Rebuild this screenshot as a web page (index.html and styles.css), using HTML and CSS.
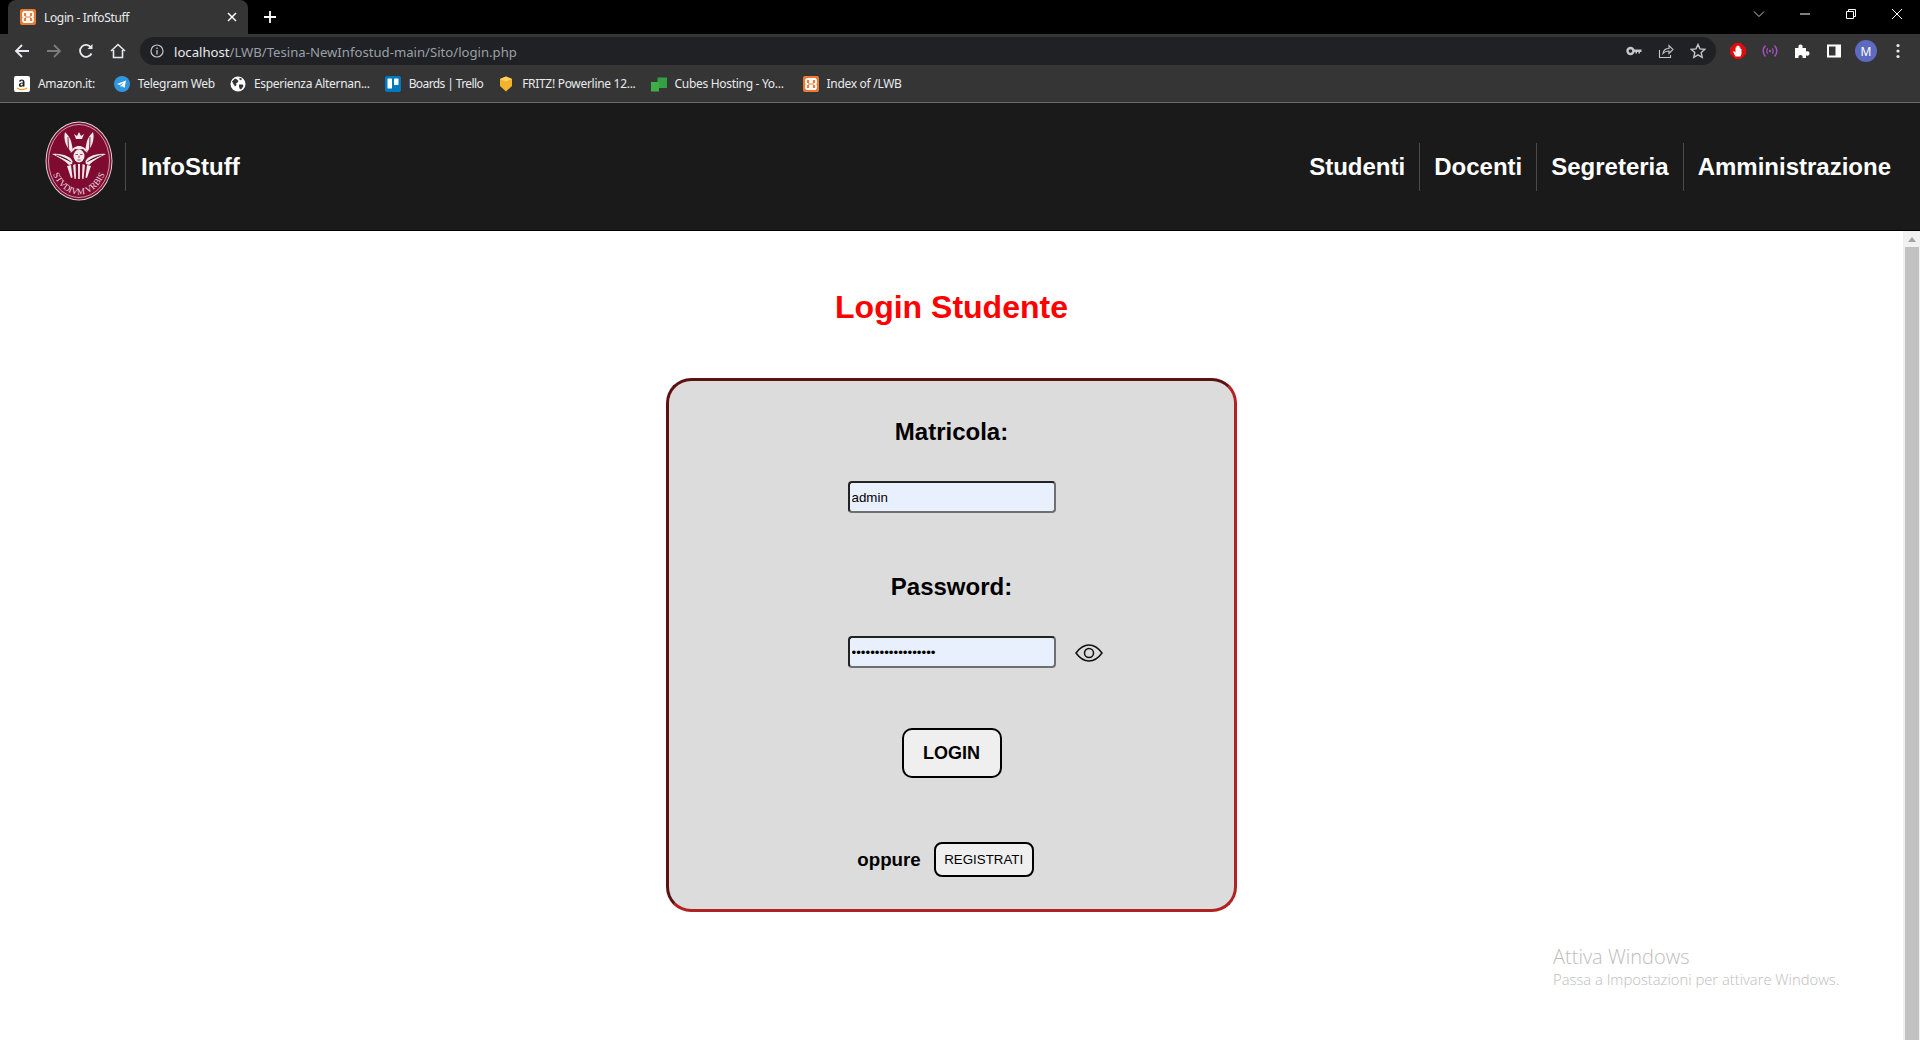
FILE: index.html
```html
<!DOCTYPE html>
<html lang="it">
<head>
    <meta charset="UTF-8" />
    <title>Login - InfoStuff</title>
    <link rel="stylesheet" href="styles.css">
</head>
<body>
    <div class="tabstrip">
        <div class="tab">
            <svg class="favicon" viewBox="0 0 16 16"><rect width="16" height="16" rx="2" fill="#ea7a34"/><path d="M4 3h3v3.500h2V3h3l1 1v3l-1.500 1L13 9v3l-1 1H9V9.500H7V13H4l-1-1V9l1.500-1L3 7V4z" fill="none" stroke="#fff" stroke-width="1.800"/></svg>
            <span class="tab-title">Login - InfoStuff</span>
            <svg class="tab-close" viewBox="0 0 10 10"><path d="M1 1l8 8M9 1l-8 8" stroke="#fff" stroke-width="1.500"/></svg>
        </div>
        <svg class="new-tab" viewBox="0 0 12 12"><path d="M6 0v12M0 6h12" stroke="#fff" stroke-width="1.800"/></svg>
        <div class="window-controls">
            <svg viewBox="0 0 12 12"><path d="M1 3.500l5 5 5-5" fill="none" stroke="#c8c8c8"/></svg>
            <svg viewBox="0 0 12 12"><path d="M1 6h10" stroke="#fff"/></svg>
            <svg viewBox="0 0 12 12"><path d="M1.500 3.500h7v7h-7zM3.500 3.500v-2h7v7h-2" fill="none" stroke="#fff"/></svg>
            <svg viewBox="0 0 12 12"><path d="M1 1l10 10M11 1L1 11" stroke="#fff"/></svg>
        </div>
    </div>

    <div class="toolbar">
        <div class="nav-buttons">
            <svg viewBox="0 0 16 16"><path d="M15 8H2M8 2L2 8l6 6" fill="none" stroke="#e8eaed" stroke-width="1.800"/></svg>
            <svg viewBox="0 0 16 16"><path d="M1 8h13M8 2l6 6-6 6" fill="none" stroke="#7c7c7c" stroke-width="1.800"/></svg>
            <svg viewBox="0 0 16 16"><path d="M13.500 10.500A6 6 0 1 1 13 4.500" fill="none" stroke="#e8eaed" stroke-width="1.800"/><path d="M14.500 1v5h-5z" fill="#e8eaed"/></svg>
            <svg viewBox="0 0 16 16"><path d="M1 8l7-6.500L15 8M3.500 7v7.500h9V7" fill="none" stroke="#e8eaed" stroke-width="1.600"/></svg>
        </div>
        <div class="addressbar">
            <svg class="info-icon" viewBox="0 0 14 14"><circle cx="7" cy="7" r="6" fill="none" stroke="#c4c7ca" stroke-width="1.200"/><path d="M7 6v4.500M7 3.500v1.500" stroke="#c4c7ca" stroke-width="1.300"/></svg>
            <span class="url"><span class="url-host">localhost</span>/LWB/Tesina-NewInfostud-main/Sito/login.php</span>
            <div class="address-actions">
                <svg viewBox="0 0 16 16"><circle cx="4.500" cy="8" r="3" fill="none" stroke="#c4c7ca" stroke-width="2.400"/><path d="M7 6.500h8.500v2.500h-1.500v1.500h-1.500V9H11v1.500H9.500V9H7z" fill="#c4c7ca"/></svg>
                <svg viewBox="0 0 16 16"><path d="M1.500 7v7.500h11V12M5 10.500C5.500 7 8 5.500 11 5.500V2.500l4 4-4 4V8C8.500 8 6.500 8.700 5 10.500z" fill="none" stroke="#c4c7ca" stroke-width="1.100"/></svg>
                <svg viewBox="0 0 16 16"><path d="M8 1.500l2 4.400 4.700.5-3.500 3.200 1 4.700L8 11.900l-4.200 2.400 1-4.700L1.300 6.400 6 5.900z" fill="none" stroke="#c4c7ca" stroke-width="1.400"/></svg>
            </div>
        </div>
        <div class="extensions">
            <svg viewBox="0 0 16 16"><path d="M5 0h6l5 5v6l-5 5H5l-5-5V5z" fill="#e00b0b"/><path d="M5.500 13.500L3 8.800l1-.8 1.500 1.500V4.500h1V3h1v-.5h1V3h1v1.500h1V6h1v5l-1 2.500z" fill="#fff"/></svg>
            <svg viewBox="0 0 16 16"><path d="M3.500 2.500c-3 3.500-3 7.500 0 11M12.500 2.500c3 3.500 3 7.500 0 11" fill="none" stroke="#a54fc0" stroke-width="1.500"/><path d="M5.700 5.300c-1.300 1.800-1.300 3.600 0 5.400M10.300 5.300c1.300 1.800 1.300 3.600 0 5.400" fill="none" stroke="#a54fc0" stroke-width="1.100"/><circle cx="8" cy="8" r="1.200" fill="#a54fc0"/></svg>
            <svg viewBox="0 0 16 16"><path d="M1 5h3.500C4 2.500 5 1.500 6.500 1.500S9 2.500 8.500 5H12v3.500c2.500-.5 3.500.5 3.500 2s-1 2.500-3.500 2V15H8.500c.5-2-.5-3-2-3s-2.500 1-2 3H1z" fill="#fff"/></svg>
            <svg viewBox="0 0 16 16"><path d="M1 1.500h14v13H1zM3 3.500v9h6.500v-9z" fill="#fff" fill-rule="evenodd"/></svg>
            <span class="avatar">M</span>
            <svg viewBox="0 0 16 16"><circle cx="8" cy="2.500" r="1.600" fill="#e8eaed"/><circle cx="8" cy="8" r="1.600" fill="#e8eaed"/><circle cx="8" cy="13.500" r="1.600" fill="#e8eaed"/></svg>
        </div>
    </div>

    <div class="bookmarks">
        <a class="bookmark bookmark-amazon">
            <svg viewBox="0 0 16 16"><rect width="16" height="16" rx="2" fill="#fff"/><path d="M10.500 10V6c0-1.500-1-2.500-2.600-2.500S5.200 4.300 5 5.500l1.500.2c.1-.6.500-1 1.200-1s1.100.4 1.100 1v.7C6.500 6.600 4.800 7.200 4.800 9c0 1.200.9 2 2.100 2 1 0 1.600-.4 2-.9l1 .9zM8.800 7.500c0 1.200-.6 2.100-1.400 2.100-.6 0-.9-.4-.9-.9 0-1 1-1.300 2.300-1.300z" fill="#222"/><path d="M3 12c3 2 7 2 10 0" fill="none" stroke="#f90" stroke-width="1.200"/></svg>
            <span>Amazon.it:</span>
        </a>
        <a class="bookmark">
            <svg viewBox="0 0 16 16"><circle cx="8" cy="8" r="8" fill="#2f97e2"/><path d="M3 8l9-3.500-1.500 7.500-2.500-2-1.300 1.300L6.500 9.500 10 6.500 5.500 9z" fill="#fff"/></svg>
            <span>Telegram Web</span>
        </a>
        <a class="bookmark">
            <svg viewBox="0 0 16 16"><circle cx="8" cy="8" r="7.500" fill="#fff"/><path d="M2 5.500l3-3 2 1 1.500 1.500-1 1.500L6 7.500 6.500 9 5 10.500 3.500 8zM9 8.500l3.500 0 1 1.500-2.500 3.500-1.500-1-.5-2.500zM9.500 1.800l2.500 1-1 1.500-1.500-.5z" fill="#333"/></svg>
            <span>Esperienza Alternan...</span>
        </a>
        <a class="bookmark bookmark-trello">
            <svg viewBox="0 0 16 16"><rect width="16" height="16" rx="2" fill="#0079bf"/><rect x="2.500" y="2.500" width="4.500" height="10" rx=".6" fill="#fff"/><rect x="9" y="2.500" width="4.500" height="6.500" rx=".6" fill="#fff"/></svg>
            <span>Boards | Trello</span>
        </a>
        <a class="bookmark">
            <svg viewBox="0 0 16 16"><path d="M8 .5l6 2.500v7L8 15.500 2 10V3z" fill="#f3b32a"/><path d="M8 .5l6 2.500-6 2.500L2 3z" fill="#ffd35c"/></svg>
            <span>FRITZ! Powerline 12...</span>
        </a>
        <a class="bookmark">
            <svg viewBox="0 0 16 16"><path d="M0 6h8v9.500H0z" fill="#3fae49"/><path d="M6.500 1.500H16V12H8V6H6.500z" fill="#35a043"/></svg>
            <span>Cubes Hosting - Yo...</span>
        </a>
        <a class="bookmark bookmark-index">
            <svg viewBox="0 0 16 16"><rect width="16" height="16" rx="2" fill="#ea7a34"/><path d="M4 3h3v3.500h2V3h3l1 1v3l-1.500 1L13 9v3l-1 1H9V9.500H7V13H4l-1-1V9l1.500-1L3 7V4z" fill="none" stroke="#fff" stroke-width="1.800"/></svg>
            <span>Index of /LWB</span>
        </a>
    </div>

    <header class="site-header">
        <div class="brand">
            <svg class="logo" viewBox="0 0 68 80">
                <defs>
                    <path id="logo-arc" d="M6 47C11 65 23 73.500 34 73.500S57 65 62 47"/>
                </defs>
                <ellipse cx="34" cy="40" rx="33.500" ry="39.500" fill="#d9d3d5"/>
                <ellipse cx="34" cy="40" rx="32.500" ry="38.500" fill="#7f0b30"/>
                <ellipse cx="34" cy="40" rx="30.500" ry="36.500" fill="none" stroke="#e9dde1" stroke-width=".7"/>
                <path d="M31 18l-2-5 3 2 2-4 2 4 3-2-2 5z" fill="#f3e8eb"/>
                <!-- upper wings -->
                <path d="M28 33C21 27 18 18 20 11c3 3 5 6 6 9 1 4 2 9 2 13z" fill="#f3e8eb"/>
                <path d="M40 33c7-6 10-15 8-22-3 3-5 6-6 9-1 4-2 9-2 13z" fill="#f3e8eb"/>
                <path d="M24 30c-1-5-1-10-1-14M44 30c1-5 1-10 1-14" stroke="#7f0b30" stroke-width=".8"/>
                <!-- side wings -->
                <path d="M7 33c8-1 15 1 21 6l-1 4-3 1c-5-5-11-8-17-11z" fill="#f3e8eb"/>
                <path d="M61 33c-8-1-15 1-21 6l1 4 3 1c5-5 11-8 17-11z" fill="#f3e8eb"/>
                <path d="M11 34c5 1 10 3 15 7M57 34c-5 1-10 3-15 7" stroke="#7f0b30" stroke-width=".7"/>
                <!-- head and hair -->
                <circle cx="34" cy="34" r="9" fill="#7f0b30"/>
                <path d="M25.500 32c1-5 5-7 8.500-7s7.500 2 8.500 7l-2.500-2-2-2-4 .5-4-.5-2 2z" fill="#f3e8eb"/>
                <ellipse cx="34" cy="35" rx="5.500" ry="6.500" fill="#f3e8eb"/>
                <path d="M30.500 33.500h2.500M35 33.500h2.500M34 34.500v2.500M32.500 39h3" stroke="#7f0b30" stroke-width=".7"/>
                <!-- lower feathers -->
                <path d="M22 45l4 12 1.500-.5L26 44zM28 44l1.500 14 1.500-.5L30.500 43zM46 45l-4 12-1.500-.5L42 44zM40 44l-1.500 14-1.500-.5L37.500 43zM33 43l.2 15h1.600L35 43z" fill="#f3e8eb"/>
                <text class="logo-motto"><textPath href="#logo-arc" startOffset="50%" text-anchor="middle">STVDIVM VRBIS</textPath></text>
            </svg>
            <span class="brand-name">InfoStuff</span>
        </div>
        <nav class="site-nav">
            <a href="#">Studenti</a>
            <a href="#">Docenti</a>
            <a href="#">Segreteria</a>
            <a href="#">Amministrazione</a>
        </nav>
    </header>

    <div class="viewport">
        <main class="content">
            <h1 class="page-title">Login Studente</h1>
            <form class="login-card">
                <label class="field-label" for="matricola">Matricola:</label>
                <input class="field-input" type="text" id="matricola" value="admin" />

                <label class="field-label password-label" for="password">Password:</label>
                <div class="password-row">
                    <input class="field-input" type="password" id="password" value="adminadminadminadm" />
                    <svg class="eye" viewBox="0 0 28 18"><path d="M1 9C5 3.500 9.500 1 14 1s9 2.500 13 8c-4 5.500-8.500 8-13 8S5 14.500 1 9z" fill="none" stroke="#111" stroke-width="1.500"/><circle cx="14" cy="9" r="4.500" fill="none" stroke="#111" stroke-width="1.500"/></svg>
                </div>

                <button class="login-button" type="button">LOGIN</button>

                <div class="register-row">
                    <span class="register-text">oppure</span>
                    <button class="register-button" type="button">REGISTRATI</button>
                </div>
            </form>
        </main>
        <div class="scrollbar">
            <span class="scroll-arrow"></span>
            <div class="scroll-thumb"></div>
        </div>
    </div>

    <div class="watermark">
        <div class="watermark-title">Attiva Windows</div>
        <div class="watermark-text">Passa a Impostazioni per attivare Windows.</div>
    </div>
</body>
</html>
```

FILE: styles.css
```css
* {
    box-sizing: border-box;
}
body {
    margin: 0;
    height: 1040px;
    overflow: hidden;
    display: flex;
    flex-direction: column;
    font-family: "Liberation Sans", Arial, sans-serif;
    background-color: #ffffff;
    position: relative;
}

/* browser frame */
.tabstrip {
    height: 34px;
    background-color: #000000;
    display: flex;
    align-items: flex-end;
    padding-left: 8px;
    flex-shrink: 0;
}
.tab {
    width: 240px;
    height: 34px;
    background-color: #353535;
    border-radius: 8px 8px 0 0;
    display: flex;
    align-items: center;
    padding: 0 11px 0 12px;
    font-family: "Noto Sans", sans-serif;
    font-size: 12px;
    letter-spacing: -0.35px;
    color: #e8eaed;
}
.favicon {
    width: 16px;
    height: 16px;
    margin-right: 8px;
}
.tab-title {
    flex: 1;
}
.tab-close {
    width: 10px;
    height: 10px;
}
.new-tab {
    width: 12px;
    height: 12px;
    margin: 0 0 11px 16px;
}
.window-controls {
    margin-left: auto;
    height: 34px;
    display: flex;
    align-items: center;
    gap: 34px;
    padding-right: 17px;
}
.window-controls svg {
    width: 12px;
    height: 12px;
    margin-bottom: 6px;
}
.toolbar {
    height: 34px;
    background-color: #353535;
    display: flex;
    align-items: center;
    flex-shrink: 0;
}
.nav-buttons {
    display: flex;
    gap: 16px;
    padding-left: 14px;
    width: 140px;
}
.nav-buttons svg {
    width: 16px;
    height: 16px;
}
.addressbar {
    width: 1576px;
    height: 28px;
    border-radius: 14px;
    background-color: #202124;
    display: flex;
    align-items: center;
    padding-left: 10px;
    font-family: "Noto Sans", sans-serif;
    font-size: 13.15px;
    color: #9aa0a6;
}
.info-icon {
    width: 14px;
    height: 14px;
    margin-right: 10px;
}
.url {
    margin-top: 2px;
}
.url-host {
    color: #e8eaed;
}
.address-actions {
    margin-left: auto;
    display: flex;
    gap: 16px;
    padding-right: 10px;
}
.address-actions svg {
    width: 16px;
    height: 16px;
}
.extensions {
    display: flex;
    align-items: center;
    gap: 16px;
    padding-left: 14px;
}
.extensions svg {
    width: 16px;
    height: 16px;
}
.avatar {
    width: 22px;
    height: 22px;
    margin: 0 -3px;
    border-radius: 50%;
    background-color: #5c6bc0;
    color: #ffffff;
    font-family: "Noto Sans", sans-serif;
    font-size: 12px;
    display: flex;
    align-items: center;
    justify-content: center;
}
.bookmarks {
    height: 35px;
    background-color: #353535;
    border-bottom: 1px solid #6a6a6a;
    display: flex;
    align-items: center;
    gap: 15px;
    padding: 0 0 3px 14px;
    flex-shrink: 0;
}
.bookmark {
    display: flex;
    align-items: center;
    gap: 8px;
    font-family: "Noto Sans", sans-serif;
    font-size: 12px;
    letter-spacing: -0.3px;
    color: #e8eaed;
}
.bookmark svg {
    width: 16px;
    height: 16px;
}
.bookmark-amazon {
    margin-right: 4px;
}
.bookmark-trello {
    letter-spacing: -0.6px;
}
.bookmark-index {
    margin-left: 4px;
}

/* site header */
.site-header {
    height: 128px;
    background-color: #1a1a1a;
    border-bottom: 1px solid #000000;
    display: flex;
    align-items: center;
    justify-content: space-between;
    padding: 0 15px 0 45px;
    flex-shrink: 0;
}
.brand {
    display: flex;
    align-items: center;
}
.logo {
    width: 68px;
    height: 80px;
    margin-top: -12px;
}
.logo-motto {
    font-family: "Liberation Serif", serif;
    font-size: 9px;
    fill: #ecdde2;
}
.brand-name {
    margin-left: 12px;
    padding-left: 15px;
    border-left: 1px solid #4a4a4a;
    height: 48px;
    line-height: 48px;
    font-size: 24px;
    font-weight: bold;
    color: #ffffff;
}
.site-nav {
    display: flex;
}
.site-nav a {
    height: 48px;
    line-height: 48px;
    padding: 0 14px;
    border-left: 1px solid #4a4a4a;
    font-size: 24px;
    font-weight: bold;
    color: #ffffff;
    text-decoration: none;
}
.site-nav a:first-child {
    border-left: none;
}

/* page content */
.viewport {
    flex: 1;
    display: flex;
    min-height: 0;
}
.content {
    flex: 1;
    min-width: 0;
    display: flex;
    flex-direction: column;
    align-items: center;
}
.page-title {
    margin: 58px 0 0 0;
    font-size: 32px;
    line-height: 37px;
    color: #ff0000;
}
.login-card {
    width: 571px;
    height: 534px;
    margin-top: 52px;
    background-color: #dcdcdc;
    border: 3px inset #b22222;
    border-radius: 25px;
    display: flex;
    flex-direction: column;
    align-items: center;
}
.field-label {
    margin-top: 37px;
    font-size: 24px;
    line-height: 28px;
    font-weight: bold;
    color: #000000;
}
.password-label {
    margin-top: 60px;
}
.field-input {
    width: 208px;
    height: 32px;
    margin-top: 35px;
    padding: 1px 2px;
    background-color: #e8f0fe;
    border-style: solid;
    border-width: 2px;
    border-color: #222222 #6f6f6f #6f6f6f #222222;
    border-radius: 4px;
    font-family: "Liberation Sans", Arial, sans-serif;
    font-size: 13.33px;
    color: #000000;
}
.password-row {
    position: relative;
    display: flex;
}
.eye {
    position: absolute;
    left: 227px;
    top: 43px;
    width: 28px;
    height: 18px;
}
.login-button {
    width: 100px;
    height: 50px;
    margin-top: 60px;
    background-color: #efefef;
    border: 2px solid #000000;
    border-radius: 10px;
    font-family: "Liberation Sans", Arial, sans-serif;
    font-size: 18px;
    font-weight: bold;
    color: #000000;
}
.register-row {
    margin: 64px 12px 0 0;
    display: flex;
    align-items: center;
    gap: 13px;
}
.register-text {
    font-size: 18.72px;
    font-weight: bold;
    color: #000000;
}
.register-button {
    width: 100px;
    height: 35px;
    background-color: #efefef;
    border: 2px solid #000000;
    border-radius: 8px;
    font-family: "Liberation Sans", Arial, sans-serif;
    font-size: 13.33px;
    color: #000000;
}
.scrollbar {
    width: 17px;
    background-color: #f1f1f1;
    display: flex;
    flex-direction: column;
    align-items: center;
}
.scroll-arrow {
    margin: 6px 0 5px 0;
    width: 0;
    height: 0;
    border-left: 4px solid transparent;
    border-right: 4px solid transparent;
    border-bottom: 5px solid #a3a3a3;
}
.scroll-thumb {
    width: 14px;
    flex: 1;
    background-color: #c1c1c1;
}

/* windows activation notice, sits over the page */
.watermark {
    position: absolute;
    left: 1553px;
    top: 943px;
    font-family: "Open Sans", sans-serif;
    font-weight: 300;
    color: #bdbdbd;
}
.watermark-title {
    font-size: 20px;
    line-height: 27px;
}
.watermark-text {
    font-size: 14.8px;
    line-height: 18px;
}
```
